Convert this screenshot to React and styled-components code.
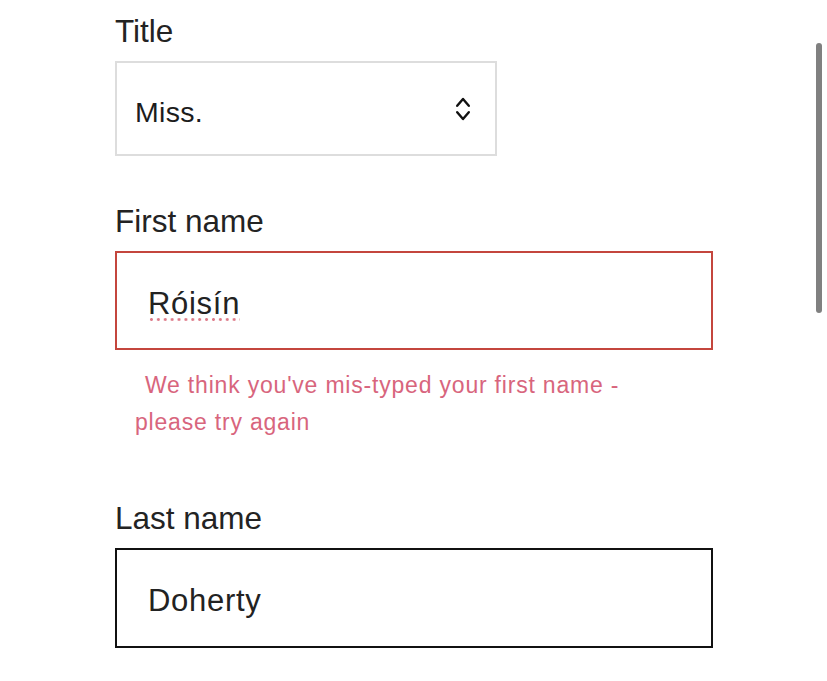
import React from "react";
import styled, { createGlobalStyle } from "styled-components";

const GlobalStyle = createGlobalStyle`
  html, body {
    margin: 0;
    padding: 0;
    background: #ffffff;
    overflow: hidden;
  }
  body {
    font-family: "Liberation Sans", Arial, sans-serif;
    color: #222222;
  }
`;

const ChevronsIcon = () => (
  <svg width="16" height="26" viewBox="0 0 16 26" fill="none">
    <path
      d="M2.2 9.8 L8 3 L13.8 9.8"
      stroke="#111"
      strokeWidth="2.4"
      strokeLinecap="round"
      strokeLinejoin="round"
    />
    <path
      d="M2.2 16.2 L8 23 L13.8 16.2"
      stroke="#111"
      strokeWidth="2.4"
      strokeLinecap="round"
      strokeLinejoin="round"
    />
  </svg>
);

const App = () => {
  return (
    <Page>
      <GlobalStyle />
      <Form>
        <Group>
          <Label>Title</Label>
          <Select>
            <SelectValue>Miss.</SelectValue>
            <ChevronsIcon />
          </Select>
        </Group>

        <Group $gap={47}>
          <Label>First name</Label>
          <Field $state="error">
            <FieldValue>
              <Misspelled>Róisín</Misspelled>
            </FieldValue>
          </Field>
          <ErrorText>
            We think you've mis-typed your first name - please try again
          </ErrorText>
        </Group>

        <Group $gap={60}>
          <Label>Last name</Label>
          <Field $state="active" $tall>
            <FieldValue>Doherty</FieldValue>
          </Field>
        </Group>
      </Form>
      <ScrollThumb />
    </Page>
  );
};

const Page = styled.div`
  position: relative;
  width: 827px;
  height: 681px;
  box-sizing: border-box;
  padding: 13px 0 0 115px;
`;

const Form = styled.div`
  display: flex;
  flex-direction: column;
  width: 598px;
`;

const Group = styled.div`
  display: flex;
  flex-direction: column;
  margin-top: ${({ $gap }) => ($gap ? `${$gap}px` : "0")};
`;

const Label = styled.div`
  font-size: 31.5px;
  line-height: 36px;
  color: #232323;
  margin-bottom: 12px;
`;

const Select = styled.div`
  width: 382px;
  height: 95px;
  box-sizing: border-box;
  border: 2px solid #dddddd;
  display: flex;
  align-items: center;
  justify-content: space-between;
  padding: 0 24px 0 18px;
`;

const SelectValue = styled.span`
  font-size: 28.5px;
  line-height: 1;
  letter-spacing: 0.3px;
  padding-top: 7px;
  color: #1c1c1c;
`;

const Field = styled.div`
  width: 598px;
  height: ${({ $tall }) => ($tall ? "100px" : "99px")};
  box-sizing: border-box;
  border: 2px solid
    ${({ $state }) => ($state === "error" ? "#c4463d" : "#111111")};
  display: flex;
  align-items: center;
  padding: 5px 0 0 31px;
`;

const FieldValue = styled.span`
  font-size: 31px;
  line-height: 1;
  letter-spacing: 0.7px;
  color: #222222;
`;

const Misspelled = styled.span`
  background-image: radial-gradient(
    circle,
    #dd7b89 1.25px,
    transparent 1.6px
  );
  background-size: 6.9px 3px;
  background-repeat: repeat-x;
  background-position: left bottom;
`;

const ErrorText = styled.div`
  width: 520px;
  margin: 17px 0 0 20px;
  font-size: 23px;
  line-height: 36.5px;
  letter-spacing: 0.8px;
  text-indent: 10px;
  color: #d8657d;
`;

const ScrollThumb = styled.div`
  position: absolute;
  top: 43px;
  right: 5px;
  width: 6px;
  height: 270px;
  border-radius: 3px;
  background: #808080;
`;

export default App;
